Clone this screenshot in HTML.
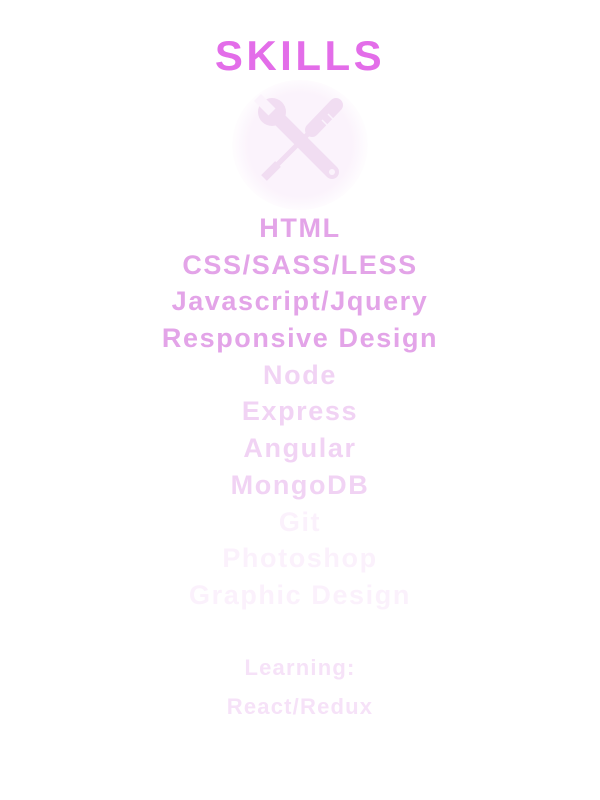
<!DOCTYPE html>
<html><head><meta charset="utf-8"><style>
body{margin:0;width:600px;height:800px;background:#fff;font-family:"Liberation Sans",sans-serif;font-weight:bold;text-align:center;overflow:hidden;position:relative}
.t{position:absolute;left:0;width:600px;top:32px;font-size:42px;letter-spacing:3.5px;color:#e36de9;line-height:48px}
.i{position:absolute;left:0;width:600px;font-size:27px;letter-spacing:1.6px;line-height:37px}
.a{color:#e3a4e8}.b{color:#f1d3f4}.c{color:#fbf1fc}
.l{position:absolute;left:0;width:600px;font-size:22px;letter-spacing:1.2px;color:#f6e2f8}
</style></head><body>
<div class="t">SKILLS</div>
<div style="position:absolute;left:232px;top:80px;width:136px;height:130px;border-radius:50%;background:radial-gradient(circle,#fbf3fc 55%,#fff 75%)"></div>
<svg style="position:absolute;left:250px;top:90px" width="100" height="100" viewBox="0 0 100 100">
<g stroke="#f1ddf2" stroke-linecap="round" fill="none">
<line x1="86" y1="15" x2="62" y2="40" stroke-width="14"/>
<line x1="62" y1="40" x2="26" y2="76" stroke-width="5"/>
<line x1="28" y1="74" x2="14" y2="88" stroke-width="8" stroke-linecap="butt"/>
<line x1="28" y1="28" x2="82" y2="82" stroke-width="14"/>
</g>
<circle cx="22" cy="22" r="14" fill="#f1ddf2"/>
<polygon points="25.5,18.5 18.5,25.5 4,11 11,4" fill="#fbf3fc"/>
<circle cx="82" cy="82" r="3" fill="#fbf3fc"/>
<line x1="72" y1="30" x2="78" y2="36" stroke="#fbf3fc" stroke-width="1.5"/>
<line x1="78" y1="24" x2="84" y2="30" stroke="#fbf3fc" stroke-width="1.5"/>
</svg>
<div class="i a" style="top:210px">HTML</div>
<div class="i a" style="top:247px">CSS/SASS/LESS</div>
<div class="i a" style="top:283px">Javascript/Jquery</div>
<div class="i a" style="top:320px">Responsive Design</div>
<div class="i b" style="top:357px">Node</div>
<div class="i b" style="top:393px">Express</div>
<div class="i b" style="top:430px">Angular</div>
<div class="i b" style="top:467px">MongoDB</div>
<div class="i c" style="top:504px">Git</div>
<div class="i c" style="top:540px">Photoshop</div>
<div class="i c" style="top:577px">Graphic Design</div>
<div class="l" style="top:655px">Learning:</div>
<div class="l" style="top:694px">React/Redux</div>
</body></html>
